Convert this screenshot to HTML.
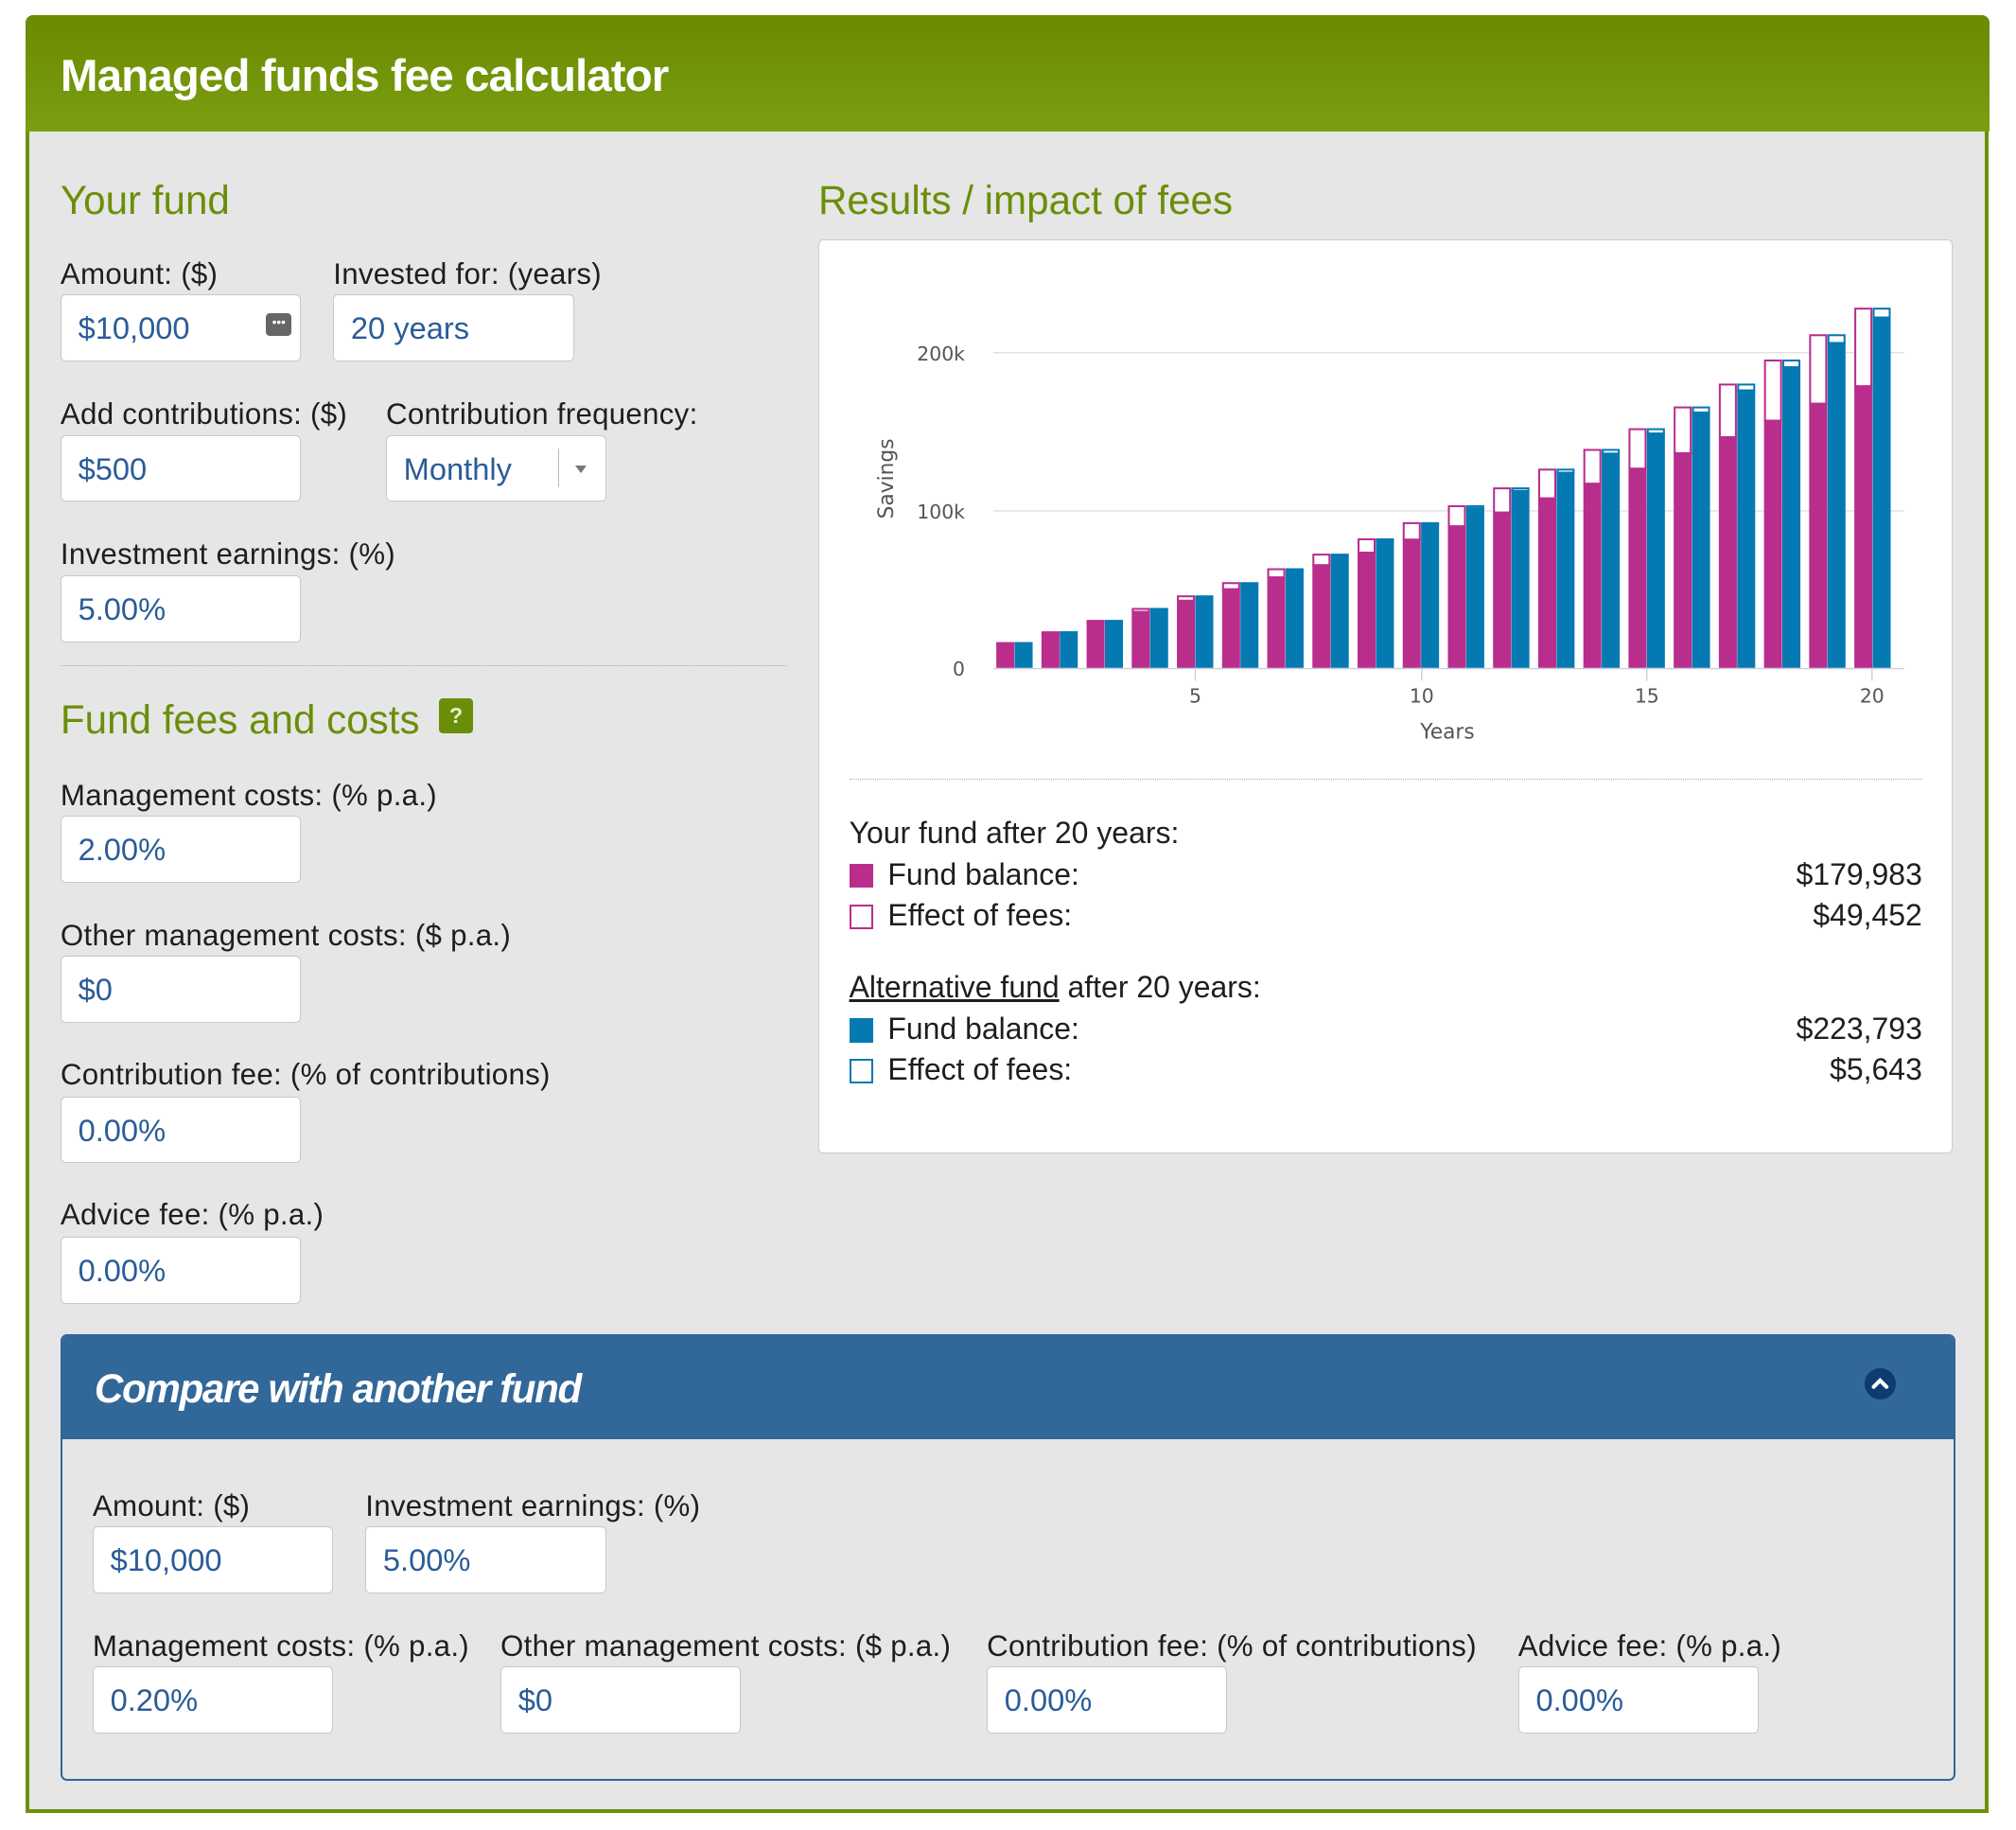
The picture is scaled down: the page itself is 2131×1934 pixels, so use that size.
<!DOCTYPE html>
<html><head><meta charset="utf-8">
<style>
html,body{margin:0;padding:0;background:#fff;}
body{width:2131px;height:1934px;overflow:hidden;}
#w{zoom:1.36;position:relative;width:1567px;height:1422px;font-family:"Liberation Sans",sans-serif;}
.frame{position:absolute;left:20px;top:12px;width:1520px;height:1394px;border:3px solid #6e9006;border-top:none;border-radius:6px 6px 0 0;background:#e6e6e6;}
.hdr{position:absolute;left:20px;top:12px;width:1526px;height:90px;background:linear-gradient(#6a8a00,#7b9e12);border-radius:6px 6px 0 0;}
.hdr span{position:absolute;left:27px;top:27px;color:#fff;font-weight:bold;font-size:35px;letter-spacing:-0.7px;}
.abs{position:absolute;}
.h2{position:absolute;color:#6b8e0a;font-size:31px;white-space:nowrap;}
.lbl{position:absolute;color:#1e1e1e;font-size:23px;letter-spacing:0.2px;white-space:nowrap;}
.in{position:absolute;width:187px;height:52px;background:#fff;border:1px solid #c8c8c8;border-radius:4px;box-sizing:border-box;color:#2a5c98;font-size:24px;line-height:52px;padding-left:13px;}
.res{position:absolute;color:#1e1e1e;font-size:23.5px;white-space:nowrap;}
.sq{position:absolute;width:19px;height:19px;box-sizing:border-box;}
</style></head><body><div id="w">
<div class="frame"></div>
<div class="hdr"><span>Managed funds fee calculator</span></div>

<div class="h2" style="left:47px;top:138px">Your fund</div>
<div class="lbl" style="left:47px;top:200px">Amount: ($)</div>
<div class="lbl" style="left:259px;top:200px">Invested for: (years)</div>
<div class="in" style="left:47px;top:229px">$10,000<div class="abs" style="left:159px;top:14px;width:20px;height:17px;background:#666;border-radius:3px;color:#fff;font-size:10px;line-height:15px;text-align:center">•••</div></div>
<div class="in" style="left:259px;top:229px">20 years</div>

<div class="lbl" style="left:47px;top:309px">Add contributions: ($)</div>
<div class="lbl" style="left:300px;top:309px">Contribution frequency:</div>
<div class="in" style="left:47px;top:338px">$500</div>
<div class="in" style="left:300px;top:338px;width:171px">Monthly<div class="abs" style="left:133px;top:10px;width:1px;height:30px;background:#bbb"></div><div class="abs" style="left:146px;top:23px;width:0;height:0;border-left:5px solid transparent;border-right:5px solid transparent;border-top:6px solid #777"></div></div>

<div class="lbl" style="left:47px;top:418px">Investment earnings: (%)</div>
<div class="in" style="left:47px;top:447px">5.00%</div>
<div class="abs" style="left:47px;top:517px;width:564px;border-top:1px dotted #aaa"></div>

<div class="h2" style="left:47px;top:542px">Fund fees and costs</div>
<div class="abs" style="left:341px;top:543px;width:27px;height:27px;background:#6b8e0a;border-radius:3px;color:#e8f0d0;font-weight:bold;font-size:17px;line-height:27px;text-align:center">?</div>
<div class="lbl" style="left:47px;top:605px">Management costs: (% p.a.)</div>
<div class="in" style="left:47px;top:634px">2.00%</div>
<div class="lbl" style="left:47px;top:714px">Other management costs: ($ p.a.)</div>
<div class="in" style="left:47px;top:743px">$0</div>
<div class="lbl" style="left:47px;top:822px">Contribution fee: (% of contributions)</div>
<div class="in" style="left:47px;top:852px">0.00%</div>
<div class="lbl" style="left:47px;top:931px">Advice fee: (% p.a.)</div>
<div class="in" style="left:47px;top:961px">0.00%</div>

<div class="h2" style="left:636px;top:138px">Results / impact of fees</div>
<div class="abs" style="left:636px;top:186px;width:882px;height:710px;background:#fff;border:1px solid #ccc;border-radius:4px;box-sizing:border-box"></div>
<svg class="abs" style="left:0;top:0" width="1567" height="900">
<g font-family="DejaVu Sans,sans-serif" font-size="15" fill="#555">
<line x1="772" y1="274" x2="1480" y2="274" stroke="#e0e0e0"/>
<line x1="772" y1="397" x2="1480" y2="397" stroke="#e0e0e0"/>
<text x="750" y="280" text-anchor="end">200k</text>
<text x="750" y="403" text-anchor="end">100k</text>
<text x="750" y="525" text-anchor="end">0</text>
<text transform="translate(694,372) rotate(-90)" text-anchor="middle" font-size="16">Savings</text>
<text x="929" y="546" text-anchor="middle">5</text>
<text x="1105" y="546" text-anchor="middle">10</text>
<text x="1280" y="546" text-anchor="middle">15</text>
<text x="1455" y="546" text-anchor="middle">20</text>
<text x="1125" y="574" text-anchor="middle" font-size="16">Years</text>
</g>
<g id="bars"></g>
<line x1="772" y1="519.5" x2="1480" y2="519.5" stroke="#ccd"/>
<g stroke="#ccd"><line x1="929" y1="519" x2="929" y2="529"/><line x1="1105" y1="519" x2="1105" y2="529"/><line x1="1280" y1="519" x2="1280" y2="529"/><line x1="1455" y1="519" x2="1455" y2="529"/></g>
</svg>
<div class="abs" style="left:660px;top:605px;width:834px;border-top:1px dotted #aaa"></div>
<div class="res" style="left:660px;top:634px">Your fund after 20 years:</div>
<div class="sq" style="left:660px;top:671px;background:#b92d8c"></div>
<div class="res" style="left:690px;top:666px">Fund balance:</div>
<div class="res" style="right:73px;top:666px">$179,983</div>
<div class="sq" style="left:660px;top:703px;border:1.5px solid #b92d8c;background:#fff"></div>
<div class="res" style="left:690px;top:698px">Effect of fees:</div>
<div class="res" style="right:73px;top:698px">$49,452</div>
<div class="res" style="left:660px;top:754px"><u>Alternative fund</u> after 20 years:</div>
<div class="sq" style="left:660px;top:791px;background:#0579b1"></div>
<div class="res" style="left:690px;top:786px">Fund balance:</div>
<div class="res" style="right:73px;top:786px">$223,793</div>
<div class="sq" style="left:660px;top:823px;border:1.5px solid #0579b1;background:#fff"></div>
<div class="res" style="left:690px;top:818px">Effect of fees:</div>
<div class="res" style="right:73px;top:818px">$5,643</div>

<div class="abs" style="left:47px;top:1037px;width:1473px;height:347px;border:1.5px solid #30659a;border-radius:5px;box-sizing:border-box;overflow:hidden">
<div class="abs" style="left:0;top:0;right:0;height:80px;background:#326799"></div>
<div class="abs" style="left:25px;top:23px;color:#fff;font-style:italic;font-weight:bold;font-size:31px;letter-spacing:-1px;white-space:nowrap">Compare with another fund</div>
<div class="abs" style="left:1401px;top:25px;width:24px;height:24px;border-radius:50%;background:#0d3d70"><svg width="24" height="24"><path d="M7 14.5 L12 9.5 L17 14.5" stroke="#fff" stroke-width="3" fill="none" stroke-linecap="round"/></svg></div>
</div>
<div class="lbl" style="left:72px;top:1157px">Amount: ($)</div>
<div class="lbl" style="left:284px;top:1157px">Investment earnings: (%)</div>
<div class="in" style="left:72px;top:1186px">$10,000</div>
<div class="in" style="left:284px;top:1186px">5.00%</div>
<div class="lbl" style="left:72px;top:1266px">Management costs: (% p.a.)</div>
<div class="lbl" style="left:389px;top:1266px">Other management costs: ($ p.a.)</div>
<div class="lbl" style="left:767px;top:1266px">Contribution fee: (% of contributions)</div>
<div class="lbl" style="left:1180px;top:1266px">Advice fee: (% p.a.)</div>
<div class="in" style="left:72px;top:1295px">0.20%</div>
<div class="in" style="left:389px;top:1295px">$0</div>
<div class="in" style="left:767px;top:1295px">0.00%</div>
<div class="in" style="left:1180px;top:1295px">0.00%</div>
</div>
<script>
function fv(r,n){var g=r/12,m=12*n,p=Math.pow(1+g,m);return 10000*p+500*(p-1)/g;}
var T0=229435,T1=179983,T2=223793;
var s0=T0/fv(0.05,20),s1=T1/fv(0.03,20),s2=T2/fv(0.048,20);
var k=122/100000,b=519,h='';
for(var i=1;i<=20;i++){
 var c=929+(i-5)*35.1;
 var v0=fv(0.05,i)*s0,v1=fv(0.03,i)*s1,v2=fv(0.048,i)*s2;
 var y0=b-v0*k,y1=b-v1*k,y2=b-v2*k;
 h+='<rect x="'+(c-13.5)+'" y="'+(y0+0.75)+'" width="12.5" height="'+(y1-y0)+'" fill="#fff" stroke="#b92d8c" stroke-width="1.5"/>';
 h+='<rect x="'+(c-14.25)+'" y="'+y1+'" width="14" height="'+(b-y1)+'" fill="#b92d8c"/>';
 h+='<rect x="'+(c+0.75)+'" y="'+(y0+0.75)+'" width="12.5" height="'+(y2-y0)+'" fill="#fff" stroke="#0579b1" stroke-width="1.5"/>';
 h+='<rect x="'+c+'" y="'+y2+'" width="14" height="'+(b-y2)+'" fill="#0579b1"/>';
}
document.getElementById('bars').innerHTML=h;
</script>
</body></html>
